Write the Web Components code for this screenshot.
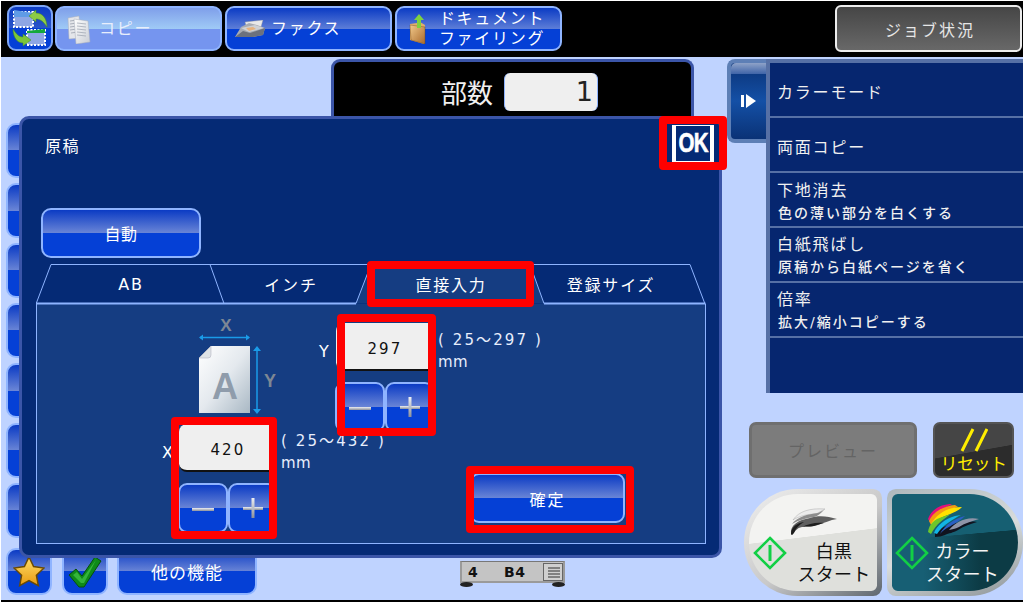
<!DOCTYPE html>
<html lang="ja"><head><meta charset="utf-8"><title>コピー</title>
<style>
html,body{margin:0;padding:0;background:#fff;width:1028px;height:603px;overflow:hidden;font-family:"DejaVu Sans","Noto Sans CJK JP",sans-serif}
</style></head><body>
<x-screen>
  <x-appbar slot="top">
    <x-swapicon></x-swapicon>
    <x-modetab selected><svg slot="icon" width="28" height="30" viewBox="0 0 28 30"><defs><linearGradient id="cp" x1="0" y1="0" x2="1" y2="1"><stop offset="0" stop-color="#fff"/><stop offset="1" stop-color="#c9cdd4"/></linearGradient></defs><path d="M3 4l11-2 2 22-12 1z" fill="#e4e6ea" stroke="#a8aeba" stroke-width=".5"/><path d="M5 7l7-1M5 10l7-1M5 13l7-1M5 16l7-1M6 19l7-1" stroke="#8f96a4" stroke-width=".7"/><path d="M9 5l14 2 2 21-14 2z" fill="url(#cp)" stroke="#a8aeba" stroke-width=".5"/><path d="M12 9l9 1M12 12l9 1M12 15l9 1M12 18l9 1M12 21l9 1" stroke="#9aa1ae" stroke-width=".7"/></svg>コピー</x-modetab>
    <x-modetab><svg slot="icon" width="30" height="18" viewBox="0 0 30 18"><path d="M10 2l18-2-2 7-14 2z" fill="#e9e9e9" stroke="#8a8f99" stroke-width=".4"/><path d="M0 17L6 7l8-4 8 2 8 3-2 7-10 2z" fill="#a7abb2"/><path d="M6 8l14-3 9 3-15 4z" fill="#cfd1d4"/><path d="M11 8l7-1 3 2-7 2z" fill="#e7b27c"/><path d="M0 17l8-6 7 2 15-5-2 7-10 2z" fill="#6c717d"/></svg>ファクス</x-modetab>
    <x-modetab><svg slot="icon" width="26" height="30" viewBox="0 0 26 30"><defs><linearGradient id="fd" x1="0" y1="0" x2="1" y2="1"><stop offset="0" stop-color="#f2c98a"/><stop offset="1" stop-color="#a8692c"/></linearGradient></defs><path d="M5 10l7-1 3-1 5 3-1 19-14-4z" fill="#e0ad6a"/><path d="M5 11l15 2v17L6 26z" fill="url(#fd)" stroke="#6d4417" stroke-width=".4"/><path d="M14 0l5 6h-3v8h-4V6H9z" fill="#7ed23f"/></svg><span style="display:block;line-height:20px;text-align:center;width:110px">ドキュメント<br>ファイリング</span></x-modetab>
    <x-jobbtn>ジョブ状況</x-jobbtn>
  </x-appbar>
  <x-leftcol slot="left">
    <x-gloss></x-gloss><x-gloss></x-gloss><x-gloss></x-gloss><x-gloss></x-gloss><x-gloss></x-gloss><x-gloss></x-gloss><x-gloss></x-gloss>
    <x-bottombar>
      <x-gloss style="width:46px"><svg width="32" height="32" viewBox="0 0 32 32"><defs><linearGradient id="st" x1="0" y1="0" x2="0" y2="1"><stop offset="0" stop-color="#ffdf6a"/><stop offset="1" stop-color="#e89a10"/></linearGradient></defs><path d="M16 1l4.600 9.600 10.400 1.400-7.600 7.200 1.900 10.400L16 24.600 6.700 29.600l1.900-10.400L1 12l10.400-1.400z" fill="url(#st)" stroke="#6a4a05" stroke-width="1.500"/></svg></x-gloss>
      <x-gloss style="width:46px;margin-left:2px"><svg width="34" height="32" viewBox="0 0 34 32"><path d="M1 19l7-6 6 7L27 1l6 4-17 26h-5z" fill="#0f8a18" stroke="#064f0c" stroke-width="1"/><path d="M5 19l4-3 5 7L28 4 16 27h-3z" fill="#34b53a"/></svg></x-gloss>
      <x-gloss style="width:140px;margin-left:1px;font-size:17px;letter-spacing:1px">他の機能</x-gloss>
    </x-bottombar>
  </x-leftcol>
  <x-centercol slot="center">
    <x-copies><span>部数</span><x-countbox>1</x-countbox></x-copies>
    <x-paperstatus><b>4</b><b>B4</b><svg width="20" height="18" viewBox="0 0 20 18"><rect x=".5" y=".5" width="19" height="17" fill="#cfcfcf" stroke="#666"/><path d="M5 5h12M5 8h12M5 11h12M5 14h12" stroke="#333" stroke-width="1.200"/></svg></x-paperstatus>
  </x-centercol>
  <x-rightcol slot="right">
    <x-sidebar>
      <x-sideitem style="padding-top:7px">カラーモード</x-sideitem>
      <x-sideitem style="padding-top:7px">両面コピー</x-sideitem>
      <x-sideitem style="padding-top:4px">下地消去<small slot="sub">色の薄い部分を白くする</small></x-sideitem>
      <x-sideitem style="padding-top:3px">白紙飛ばし<small slot="sub">原稿から白紙ページを省く</small></x-sideitem>
      <x-sideitem style="padding-top:3px">倍率<small slot="sub">拡大/縮小コピーする</small></x-sideitem>
    </x-sidebar>
    <x-actionrow>
      <x-previewbtn>プレビュー</x-previewbtn>
      <x-resetbtn>リセット</x-resetbtn>
    </x-actionrow>
    <x-startrow>
      <x-startbtn kind="bw"><svg slot="logo" width="50" height="27" viewBox="0 0 50 27"><path d="M5 12C11 3 22 0 37 1L28 6C20 6 11 8 5 12z" fill="#ececec" stroke="#9a9a9a" stroke-width=".4"/><path d="M4 16C9 9 20 6 30 5l6-3c-3 3-6 6-10 7-8 1-15 3-22 7z" fill="#8d8d8d"/><path d="M3 26C2 17 10 12 22 10 30 7 40 8 49 11 42 12 36 15 30 17 24 19 18 18 14 19 9 20 7 23 4 27z" fill="#5f5f5f"/><path d="M3 26C3 19 9 15 16 14 11 17 8 20 6 25L4 27zM14 19c6-3 14-5 22-4-4 1-7 2-10 3-4 1-8 0-12 1z" fill="#1d1d1d"/></svg>白黒<br>スタート</x-startbtn>
      <x-startbtn kind="color"><svg slot="logo" width="53" height="33" viewBox="0 0 53 33"><path d="M8 29C12 24 20 21 29 19c6-1 14-2 21-1-6 2-13 4-19 8-5 3-9 3-13 5-3 1-6 2-10 2z" fill="#10131f"/><path d="M1 15C4 6 13 0 25 0 20 3 10 7 3 18z" fill="#e4107c"/><path d="M2 17C6 8 16 2 28 1l3 2C22 5 12 10 4 21z" fill="#f59a12"/><path d="M4 20C10 10 20 3 35 3 30 8 25 9 21 11 15 13 9 16 5 23z" fill="#ffe100"/><path d="M1 28C2 20 8 15 15 13l9-3C18 14 9 20 4 30z" fill="#6cc62c"/><path d="M7 29c3-8 11-14 21-17l6-1C26 15 16 21 10 30z" fill="#12b4e6"/><path d="M13 30c4-8 13-15 25-18-4 4-8 6-11 8-5 3-10 5-14 10z" fill="#2a5fc4"/><path d="M22 26C28 18 40 12 52 15 46 17 38 19 32 23 28 25 25 25 22 26z" fill="#8f94a8"/></svg>カラー<br>スタート</x-startbtn>
    </x-startrow>
  </x-rightcol>

  <x-dialog slot="overlay">
    <span slot="title">原稿</span>
    <x-okbtn slot="ok">OK</x-okbtn>
    <x-gloss slot="auto" style="width:160px;height:50px">自動</x-gloss>
    <x-tabs slot="tabs"><span>AB</span><span>インチ</span><span>直接入力</span><span>登録サイズ</span></x-tabs>
    <x-paperfig slot="col1"></x-paperfig>
    <x-numfield slot="col1" label="X" value="420" range="( 25～432 )"></x-numfield>
    <x-numfield slot="col2" label="Y" value="297" range="( 25～297 )"></x-numfield>
    <x-confirm slot="col2">確定</x-confirm>
  </x-dialog>

  <x-callout slot="overlay" style="left:658px;top:115px;width:68px;height:54px"></x-callout>
  <x-callout slot="overlay" style="left:366px;top:260px;width:167px;height:46px"></x-callout>
  <x-callout slot="overlay" style="left:336px;top:313px;width:99px;height:122px"></x-callout>
  <x-callout slot="overlay" style="left:170px;top:416px;width:106px;height:122px"></x-callout>
  <x-callout slot="overlay" style="left:465px;top:465px;width:168px;height:67px"></x-callout>
</x-screen>

<script>
function def(name,css,html){customElements.define(name,class extends HTMLElement{constructor(){super();this.attachShadow({mode:'open'}).innerHTML='<style>'+css+'</style>'+html;}});}
const gloss='linear-gradient(#0b3bc4 0,#6a85d6 50%,#0540d6 50%,#0540d6 100%)';
def('x-screen',`:host{display:grid;position:relative;box-sizing:border-box;margin:1px 0 0 1px;width:1022px;height:601px;background:#bfd3ff;border-bottom:2px solid #000;grid-template-columns:330px 396px 296px;grid-template-rows:56px 1fr;color:#fff;overflow:hidden}
.top{grid-column:1/-1}`,
`<div class="top"><slot name="top"></slot></div><slot name="left"></slot><slot name="center"></slot><slot name="right"></slot><slot name="overlay"></slot>`);
def('x-appbar',`:host{display:flex;height:56px;box-sizing:border-box;background:#000;padding:4px 1px 5px 6px;align-items:stretch}`,`<slot></slot>`);
def('x-swapicon',`:host{display:block;width:46px;height:46px;box-sizing:border-box;border:2px solid #7fa6f5;border-radius:9px;background:linear-gradient(#0b3bc4,#2a55c8 50%,#0540d6 50%);margin-right:2px;flex:none}svg{display:block}`,
`<svg width="42" height="42" viewBox="0 0 42 42"><rect x="5" y="5" width="19" height="15" fill="#8ea6e4" stroke="#fff" stroke-width="2" stroke-dasharray="2 1.500"/><path d="M5 3l19 3v4H5z" fill="#5f9be6"/><rect x="18" y="23" width="18" height="15" fill="#8ea6e4" stroke="#fff" stroke-width="2" stroke-dasharray="2 1.500"/><path d="M18 24l18-2v4H18z" fill="#14a83a"/><path d="M20 9l7-6v3c7 0 11 6 11 14-4-6-7-8-11-8v3z" fill="#8ccb45" stroke="#3f8a25" stroke-width=".5"/><path d="M22 33l-8-6v3c-5 0-7-4-10-8 0 8 4 14 10 14v3z" fill="#7cc53a" stroke="#3f8a25" stroke-width=".5"/></svg>`);
def('x-modetab',`:host{display:flex;align-items:center;width:167px;height:45px;margin:1px 3px 0 0;flex:none;box-sizing:border-box;border:2px solid #8fb4ff;border-radius:9px;background:linear-gradient(#0b3bc4 0,#5f7fd8 52%,#0540d6 52%);font-size:16px;letter-spacing:1.700px;color:#fff;padding-left:8px;gap:6px;white-space:nowrap;line-height:20px}
:host([selected]){background:linear-gradient(#7f9fea 0,#a0cbf6 52%,#7595ef 52%);color:#e8eefc}`,`<slot name="icon"></slot><slot></slot>`);
def('x-jobbtn',`:host{display:flex;align-items:center;justify-content:center;margin-left:auto;width:187px;box-sizing:border-box;border:2px solid #ededed;border-radius:6px;background:linear-gradient(#464646,#686868);color:#e6e6e6;font-size:16px;letter-spacing:2px;padding-left:3px;flex:none}`,`<slot></slot>`);
def('x-gloss',`:host{display:flex;align-items:center;justify-content:center;box-sizing:border-box;height:55px;border:2px solid #8fb4ff;border-radius:10px;background:${gloss};color:#fff;font-size:16px;letter-spacing:.5px;flex:none}`,`<slot></slot>`);
def('x-leftcol',`:host{display:flex;flex-direction:column;gap:5px;padding:66px 0 0 5px;box-sizing:border-box;width:250px}`,`<slot></slot>`);
def('x-bottombar',`:host{display:flex;gap:8px;margin-top:5px;height:47px}::slotted(*){height:47px!important}`,`<slot></slot>`);
def('x-centercol',`:host{display:flex;flex-direction:column;padding-top:2px;box-sizing:border-box;height:543px}`,`<slot></slot>`);
def('x-copies',`:host{display:flex;align-items:center;justify-content:flex-end;box-sizing:border-box;width:363px;height:100px;background:#000;border:3px solid #3b55a8;border-bottom:none;border-radius:9px 9px 0 0;color:#f0f0f0;font-size:26px;padding:0 93px 38px 0;gap:11px}`,`<slot></slot>`);
def('x-countbox',`:host{display:block;box-sizing:border-box;width:94px;height:38px;border-radius:6px;background:#efefef;border-left:1px solid #8fb4ff;border-right:1px solid #8fb4ff;color:#222;font-size:27px;text-align:right;line-height:38px;padding-right:4px}`,`<slot></slot>`);
def('x-paperstatus',`:host{display:grid;grid-template-columns:36px 39px 20px;align-items:center;box-sizing:border-box;width:105px;height:22px;margin:auto 0 17px 129px;padding-left:6px;background:#c4c4c4;border:2px solid #9a9a9a;border-top:1px solid #777;color:#111;font-size:14px;position:relative}
:host::before,:host::after{content:"";position:absolute;bottom:-6px;width:13px;height:5px;border-radius:50%;background:#222}:host::before{left:-2px}:host::after{right:-2px}
::slotted(b){font-weight:bold;letter-spacing:.5px}`,`<slot></slot>`);
def('x-rightcol',`:host{display:flex;flex-direction:column;box-sizing:border-box;height:543px;padding-top:2px;margin-left:0}`,`<slot></slot>`);
def('x-sidebar',`:host{display:flex;position:relative;height:334px;box-sizing:border-box;margin-left:39px;background:#06266f;border-left:4px solid #5670a5;border-top:4px solid #5670a5;flex-direction:column;width:257px}
.tog{position:absolute;left:-43px;top:-4px;width:39px;height:84px;box-sizing:border-box;border:4px solid #5d7fb6;border-right:none;border-radius:8px 0 0 8px;background:linear-gradient(#0a3276,#1450a6 50%,#0a3276);display:flex;align-items:center;justify-content:center}
.tog::before{content:"";position:absolute;left:0;right:0;top:0;height:11px;border-radius:5px 0 0 0;background:linear-gradient(#8ea2c8,#3f64a8)}`,
`<div class="tog"><svg width="16" height="14" viewBox="0 0 16 14"><rect x="0" y="1" width="3" height="12" fill="#fff"/><path d="M5 0l10 7-10 7z" fill="#fff"/></svg></div><slot></slot>`);
def('x-sideitem',`:host{display:flex;flex-direction:column;justify-content:center;box-sizing:border-box;height:55px;border-bottom:2px solid #5670a5;padding:0 0 0 7px;font-size:16px;letter-spacing:1.800px;color:#f0f0f0;line-height:22px}
::slotted(small){font-size:14px;letter-spacing:2px;font-weight:500;display:block;line-height:22px;margin-left:1px}`,`<div><slot></slot></div><slot name="sub"></slot>`);
def('x-actionrow',`:host{display:flex;gap:16px;margin:29px 0 0 22px;height:56px}`,`<slot></slot>`);
def('x-previewbtn',`:host{display:flex;align-items:center;justify-content:center;width:168px;box-sizing:border-box;background:#7c7c7c;border:3px solid #6f6f6f;border-radius:7px;color:#646464;font-size:16px;letter-spacing:2px}`,`<slot></slot>`);
def('x-resetbtn',`:host{display:flex;flex-direction:column;align-items:center;width:81px;box-sizing:border-box;border:2px solid #555;border-radius:7px;background:linear-gradient(170deg,#454545 0,#454545 52%,#2c2c2c 53%);color:#ffee00;font-size:17px;letter-spacing:-.5px;line-height:20px;padding-top:4px}svg{display:block;margin-bottom:2px}`,
`<svg width="28" height="24" viewBox="0 0 28 24"><path d="M13 1L2 23M27 1L16 23" stroke="#ffee00" stroke-width="3"/></svg><slot></slot>`);
def('x-startrow',`:host{display:flex;gap:5px;margin:11px 0 0 17px;height:107px}`,`<slot></slot>`);
def('x-startbtn',`:host{display:block;position:relative;box-sizing:border-box;width:138px;height:107px;padding:5px;border-radius:54px 9px 9px 54px;background:linear-gradient(145deg,#f0f0f0 0,#c8c8c8 55%,#5e666e 100%);color:#111;font-size:18px;letter-spacing:.2px;line-height:23px}
:host([kind=color]){width:136px;border-radius:9px 54px 54px 9px;background:linear-gradient(160deg,#aeb8bc,#d8dcdc 50%,#8a9296);color:#f4f4f4}
.in{position:relative;height:100%;box-sizing:border-box;border-radius:50px 6px 6px 50px;background:linear-gradient(173deg,#f3f3f1 0,#f3f3f1 44%,#dfe0dc 44.500%);overflow:hidden;text-align:center}
:host([kind=color]) .in{border-radius:6px 50px 50px 6px;background:linear-gradient(175deg,#165f72 43%,transparent 43.500%),linear-gradient(90deg,#175f74 25%,#0c3b45 70%)}
.logo{position:absolute;left:39px;top:14px}:host([kind=color]) .logo{left:35px;top:10px}
.txt{position:absolute;left:42px;right:0;top:46px}:host([kind=color]) .txt{left:24px;right:9px}
.d{position:absolute;left:4px;top:42px}:host([kind=color]) .d{left:3px}`,
`<div class="in"><div class="logo"><slot name="logo"></slot></div><svg class="d" width="34" height="34" viewBox="0 0 34 34"><path d="M17 2l15 15-15 15L2 17z" fill="none" stroke="#12cf45" stroke-width="2.600"/><path d="M17 9v16" stroke="#12cf45" stroke-width="3"/></svg><div class="txt"><slot></slot></div></div>`);
def('x-dialog',`:host{display:flex;flex-direction:column;position:absolute;left:18px;top:115px;width:703px;height:442px;box-sizing:border-box;border:3px solid #3b55a8;border-radius:10px;background:#052a75;padding:0 13px 11px 14px;color:#fff}
.title{height:89px;box-sizing:border-box;padding:17px 0 0 9px;font-size:16px;letter-spacing:1.500px;line-height:21px;display:flex;justify-content:space-between}
.auto{height:56px;padding-left:5px}
.panel{flex:1;display:flex;box-sizing:border-box;background:#153d82;border:1px solid #8eb4ff;border-top:none;padding-left:123px}
.c1{width:157px;padding-top:12px}.c2{padding-top:11px}`,
`<div class="title"><slot name="title"></slot><slot name="ok"></slot></div><div class="auto"><slot name="auto"></slot></div><slot name="tabs"></slot><div class="panel"><div class="c1"><slot name="col1"></slot></div><div class="c2"><slot name="col2"></slot></div></div>`);
def('x-okbtn',`:host{display:flex;position:absolute;left:650px;top:6px;width:42px;height:37px;box-sizing:border-box;border:solid #fff;border-width:1px 4px;background:#052a75;color:#fff;font:bold 27px "Liberation Sans",sans-serif;align-items:center;justify-content:center;letter-spacing:-1px;overflow:hidden;-webkit-text-stroke:.6px #fff}
span{display:inline-block;transform:scaleX(.76);white-space:nowrap}`,`<span><slot></slot></span>`);
def('x-tabs',`:host{display:flex;position:relative;height:40px;padding-left:15px;font-size:16px;letter-spacing:1.800px}
svg{position:absolute;left:0;top:0}
::slotted(span){position:relative;width:160px;display:flex;align-items:center;justify-content:center}`,
`<svg width="670" height="41" viewBox="0 0 670 41" fill="none" stroke="#8eb4ff"><path d="M320 39.500L335 .5H494L508 39.500" fill="#153d82" stroke="none"/><path d="M0 40L15 .5H174L188 39.500"/><path d="M174 .5H335L320 39.500"/><path d="M335 .5H494L508 39.500"/><path d="M494 .5H654L669 40"/><path d="M0 39.500H320M508 39.500H669.500" stroke-width="2"/></svg><slot></slot>`);
def('x-paperfig',`:host{display:block;margin-left:39px;height:100px}svg{display:block;overflow:visible}`,
`<svg width="80" height="100" viewBox="0 0 80 100"><defs><linearGradient id="p" x1="0" y1="0" x2="1" y2="1"><stop offset="0" stop-color="#fff"/><stop offset=".5" stop-color="#e4e9ee"/><stop offset="1" stop-color="#a9b8c4"/></linearGradient></defs>
<text x="27" y="15" font-size="17" font-weight="bold" fill="#7d8794" text-anchor="middle" font-family="Liberation Sans">X</text>
<path d="M1 21.500H50" stroke="#1a9be8" stroke-width="1.500"/><path d="M0 21.500l4-3v6zM51 21.500l-4-3v6z" fill="#1a9be8"/>
<path d="M12 30H51V97H0V42z" fill="url(#p)"/><path d="M0 42l12-12v9q0 3-3 3z" fill="#dfe3e6" stroke="#aab" stroke-width=".5"/>
<text x="26" y="83" font-size="36" font-weight="bold" fill="#8f9cab" text-anchor="middle" font-family="Liberation Sans">A</text>
<path d="M58 32V96" stroke="#1a9be8" stroke-width="1.500"/><path d="M58 30l-4 5h8zM58 98l-4-5h8z" fill="#1a9be8"/>
<text x="71" y="71" font-size="18" font-weight="bold" fill="#7d8794" text-anchor="middle" font-family="Liberation Sans">Y</text></svg>`);
customElements.define('x-numfield',class extends HTMLElement{constructor(){super();const s=this.attachShadow({mode:'open'});const l=this.getAttribute('label'),v=this.getAttribute('value'),r=this.getAttribute('range');
const sign=(d)=>`<svg width="30" height="26" viewBox="0 0 30 26"><defs><linearGradient id="sg" x1="0" y1="0" x2="0" y2="1"><stop offset="0" stop-color="#eef0f4"/><stop offset="1" stop-color="#8a8f9a"/></linearGradient></defs>${d}</svg>`;
s.innerHTML=`<style>:host{display:grid;grid-template-columns:19px 98px auto;grid-template-rows:48px 50px;row-gap:11px;width:max-content;margin-top:8px;font-size:15px}
.l{align-self:center;font-size:16px;padding:8px 0 0 2px}.v{background:#efefef;border-bottom:2px solid #111;box-sizing:border-box;border-radius:8px;border-bottom-right-radius:0;border-top-right-radius:0;color:#111;font-size:15px;letter-spacing:2.200px;display:flex;align-items:center;justify-content:center;padding-top:6px}
.r{padding:6px 0 0 4px;letter-spacing:2.100px;line-height:22px;white-space:nowrap;color:#e8eefc}.r span{letter-spacing:.5px}
.b{grid-column:2;display:flex;margin-left:-1px}.b div{width:50px;box-sizing:border-box;border:2px solid #8fb4ff;border-radius:9px;background:${gloss};display:flex;align-items:center;justify-content:center;flex:none}.b div+div{width:49px}</style>
<div class="l">${l}</div><div class="v">${v}</div><div class="r">${r}<br><span>mm</span></div><div class="b"><div>${sign('<rect x="4" y="13" width="22" height="3" fill="url(#sg)"/>')}</div><div>${sign('<rect x="5" y="12" width="20" height="3" fill="url(#sg)"/><rect x="13.500" y="3" width="3" height="20" fill="url(#sg)"/>')}</div></div>`;}});
def('x-confirm',`:host{display:flex;align-items:center;justify-content:center;box-sizing:border-box;margin:41px 0 0 153px;width:155px;height:50px;border:2px solid #8fb4ff;border-radius:9px;background:${gloss};color:#fff;font-size:16px;letter-spacing:2px;padding-top:2px}`,`<slot></slot>`);
def('x-callout',`:host{position:absolute;box-sizing:border-box;border:8px solid #f00;border-radius:4px;pointer-events:none}`,``);
</script>
</body></html>
